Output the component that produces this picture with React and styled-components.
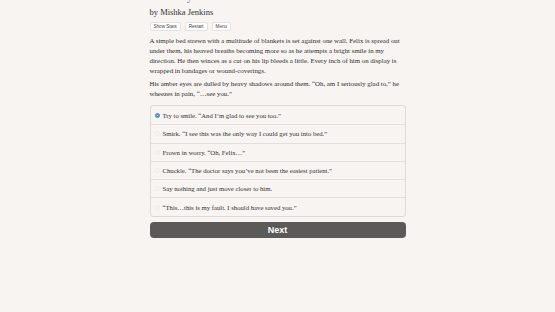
import React, { useState } from 'react';
import styled, { createGlobalStyle } from 'styled-components';

const GlobalStyle = createGlobalStyle`
  html, body {
    margin: 0;
    padding: 0;
    background: #f7f4f1;
  }
  body {
    font-family: "Liberation Serif", "DejaVu Serif", serif;
    color: #2b2b2b;
  }
`;

const Page = styled.div`
  width: 256px;
  margin: 0 auto;
  padding-bottom: 40px;
`;

const Title = styled.h1`
  margin: -10px 0 0 0;
  font-size: 12px;
  font-weight: normal;
  color: #8a8886;
  line-height: 12px;
  white-space: nowrap;
`;

const Author = styled.div`
  margin-top: 5px;
  font-size: 8.5px;
  line-height: 10px;
  color: #333;
`;

const ButtonBar = styled.div`
  display: flex;
  gap: 4px;
  margin-top: 5px;
`;

const SmallButton = styled.button`
  font-family: "Liberation Sans", Arial, sans-serif;
  font-size: 4.6px;
  color: #444;
  background: #fff;
  border: 1px solid #e4e1de;
  border-radius: 2px;
  padding: 1px 3px;
  height: 9px;
  line-height: 5px;
`;

const Paragraph = styled.p`
  margin: 5px 0 0 0;
  font-size: 6.85px;
  line-height: 10px;
  color: #2e2e2e;
  & + & {
    margin-top: 3px;
  }
`;

const ChoiceList = styled.div`
  margin-top: 6px;
  border: 1px solid #dcd9d6;
  border-radius: 3px;
  background: #f7f4f1;
  overflow: hidden;
`;

const ChoiceRow = styled.label`
  display: flex;
  align-items: center;
  gap: 3px;
  box-sizing: border-box;
  height: 18.3px;
  padding-left: 4px;
  font-size: 6.7px;
  color: #333;
  & + & {
    border-top: 1px solid #e2dfdc;
  }
`;

const Radio = styled.span`
  width: 5px;
  height: 5px;
  border-radius: 50%;
  flex: none;
  box-sizing: border-box;
  background: ${p => (p.$checked ? '#fff' : 'transparent')};
  border: ${p => (p.$checked ? '1.6px solid #3d7ec9' : '1px solid #eeebe8')};
  box-shadow: ${p => (p.$checked ? 'inset 0 0 0 1px #3d7ec9' : 'none')};
`;

const NextButton = styled.button`
  display: block;
  width: 100%;
  margin-top: 5px;
  height: 16px;
  border: none;
  border-radius: 4px;
  background: #5b5a59;
  color: #fff;
  font-family: "Liberation Sans", Arial, sans-serif;
  font-weight: bold;
  font-size: 9px;
  line-height: 16px;
  padding: 0;
`;

const choices = [
  'Try to smile. \u201cAnd I\u2019m glad to see you too.\u201d',
  'Smirk. \u201cI see this was the only way I could get you into bed.\u201d',
  'Frown in worry. \u201cOh, Felix\u2026\u201d',
  'Chuckle. \u201cThe doctor says you\u2019ve not been the easiest patient.\u201d',
  'Say nothing and just move closer to him.',
  '\u201cThis\u2026this is my fault. I should have saved you.\u201d',
];

export default function App() {
  const [selected, setSelected] = useState(0);
  return (
    <>
      <GlobalStyle />
      <Page>
        <Title>The Wayhaven Chronicles: Book One</Title>
        <Author>by Mishka Jenkins</Author>
        <ButtonBar>
          <SmallButton>Show Stats</SmallButton>
          <SmallButton>Restart</SmallButton>
          <SmallButton>Menu</SmallButton>
        </ButtonBar>
        <Paragraph>
          A simple bed strewn with a multitude of blankets is set against one wall. Felix is spread out
          under them, his heaved breaths becoming more so as he attempts a bright smile in my
          direction. He then winces as a cut on his lip bleeds a little. Every inch of him on display is
          wrapped in bandages or wound-coverings.
        </Paragraph>
        <Paragraph>
          His amber eyes are dulled by heavy shadows around them. &ldquo;Oh, am I seriously glad to,&rdquo; he
          wheezes in pain, &ldquo;&hellip;see you.&rdquo;
        </Paragraph>
        <ChoiceList>
          {choices.map((c, i) => (
            <ChoiceRow key={i} onClick={() => setSelected(i)}>
              <Radio $checked={selected === i} />
              {c}
            </ChoiceRow>
          ))}
        </ChoiceList>
        <NextButton>Next</NextButton>
      </Page>
    </>
  );
}
